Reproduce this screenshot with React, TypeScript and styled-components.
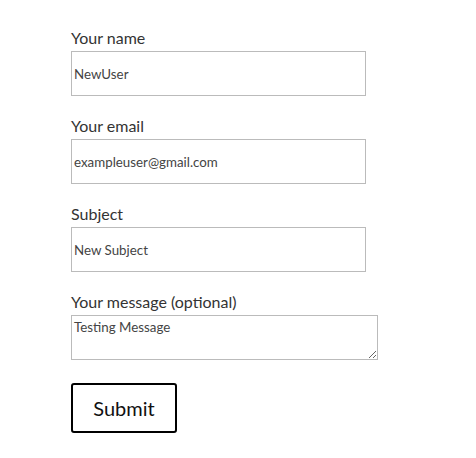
import React from 'react'
import styled, { createGlobalStyle } from 'styled-components'

const GlobalStyle = createGlobalStyle`
  html, body {
    margin: 0;
    padding: 0;
    background: #fff;
  }
  body {
    font-family: Lato, "Liberation Sans", sans-serif;
  }
`

const Form = styled.form`
  display: flex;
  flex-direction: column;
  align-items: flex-start;
  padding: 27px 0 0 71px;
`

const Field = styled.div`
  display: flex;
  flex-direction: column;
  align-items: flex-start;
  margin-bottom: 19px;
`

const Label = styled.label`
  font-size: 16px;
  line-height: 22px;
  color: #333;
  margin-bottom: 2px;
`

const TextInput = styled.input`
  box-sizing: border-box;
  width: 295px;
  height: 45px;
  padding: 0 2px;
  border: 1px solid #bbb;
  border-radius: 0;
  font-family: Lato, "Liberation Sans", sans-serif;
  font-size: 13.33px;
  color: #444;
  background: #fff;
  outline: none;
`

const TextArea = styled.textarea`
  box-sizing: border-box;
  width: 307px;
  height: 45px;
  padding: 3px 2px;
  border: 1px solid #bbb;
  border-radius: 0;
  font-family: Lato, "Liberation Sans", sans-serif;
  font-size: 13.33px;
  line-height: 16px;
  color: #444;
  background: #fff;
  outline: none;
  resize: both;
  display: block;
`

const SubmitButton = styled.button`
  box-sizing: border-box;
  width: 106px;
  height: 50px;
  margin-top: 4px;
  border: 2px solid #000;
  border-radius: 3px;
  background: #fff;
  color: #111;
  font-family: Lato, "Liberation Sans", sans-serif;
  font-size: 20px;
  cursor: pointer;
`

const fields = [
  { label: 'Your name', value: 'NewUser' },
  { label: 'Your email', value: 'exampleuser@gmail.com' },
  { label: 'Subject', value: 'New Subject' },
]

export default function App() {
  return (
    <>
      <GlobalStyle />
      <Form onSubmit={(e) => e.preventDefault()}>
        {fields.map((f) => (
          <Field key={f.label}>
            <Label>{f.label}</Label>
            <TextInput defaultValue={f.value} />
          </Field>
        ))}
        <Field>
          <Label>Your message (optional)</Label>
          <TextArea defaultValue="Testing Message" />
        </Field>
        <SubmitButton type="submit">Submit</SubmitButton>
      </Form>
    </>
  )
}
